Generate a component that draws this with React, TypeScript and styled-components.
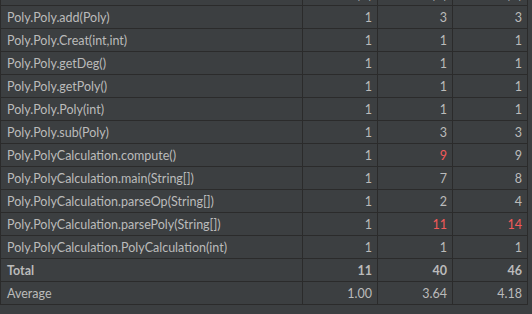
import React from 'react';
import styled, { createGlobalStyle } from 'styled-components';

const GlobalStyle = createGlobalStyle`
  html, body {
    margin: 0;
    padding: 0;
    background-color: #3c3f41;
    overflow: hidden;
  }
`;

const Panel = styled.div`
  width: 532px;
  height: 314px;
  background-color: #3c3f41;
  overflow: hidden;
  font-family: Lato, 'Noto Sans', sans-serif;
  font-size: 12.5px;
  color: #bbbbbb;
`;

const Table = styled.div`
  width: 528px;
  margin-top: -17px;
  border-left: 1px solid #2b2b2b;
  box-sizing: border-box;
`;

const Row = styled.div<{ $bold?: boolean }>`
  display: grid;
  grid-template-columns: 302px 75px 75px 75px;
  height: 22px;
  border-bottom: 1px solid #2b2b2b;
  font-weight: ${(p) => (p.$bold ? 700 : 400)};
`;

const Cell = styled.div<{ $num?: boolean; $alert?: boolean }>`
  box-sizing: border-box;
  border-right: 1px solid #2b2b2b;
  display: flex;
  align-items: center;
  justify-content: ${(p) => (p.$num ? 'flex-end' : 'flex-start')};
  padding: ${(p) => (p.$num ? '0 5px 0 0' : '0 0 0 6px')};
  color: ${(p) => (p.$alert ? '#f25a5a' : '#bbbbbb')};
  white-space: nowrap;
`;

type Metric = [string, string, string, string, boolean?, boolean?];

const rows: Metric[] = [
  ['Poly.Poly.add(Poly)', '1', '3', '3'],
  ['Poly.Poly.Creat(int,int)', '1', '1', '1'],
  ['Poly.Poly.getDeg()', '1', '1', '1'],
  ['Poly.Poly.getPoly()', '1', '1', '1'],
  ['Poly.Poly.Poly(int)', '1', '1', '1'],
  ['Poly.Poly.sub(Poly)', '1', '3', '3'],
  ['Poly.PolyCalculation.compute()', '1', '9', '9', true, false],
  ['Poly.PolyCalculation.main(String[])', '1', '7', '8'],
  ['Poly.PolyCalculation.parseOp(String[])', '1', '2', '4'],
  ['Poly.PolyCalculation.parsePoly(String[])', '1', '11', '14', true, true],
  ['Poly.PolyCalculation.PolyCalculation(int)', '1', '1', '1'],
];

const App = () => {
  return (
    <Panel>
      <GlobalStyle />
      <Table>
        <Row>
          <Cell>method</Cell>
          <Cell $num>ev(G)</Cell>
          <Cell $num>iv(G)</Cell>
          <Cell $num>v(G)</Cell>
        </Row>
        {rows.map(([name, ev, iv, v, ivHot, vHot]) => (
          <Row key={name}>
            <Cell>{name}</Cell>
            <Cell $num>{ev}</Cell>
            <Cell $num $alert={ivHot}>{iv}</Cell>
            <Cell $num $alert={vHot}>{v}</Cell>
          </Row>
        ))}
        <Row $bold>
          <Cell>Total</Cell>
          <Cell $num>11</Cell>
          <Cell $num>40</Cell>
          <Cell $num>46</Cell>
        </Row>
        <Row>
          <Cell>Average</Cell>
          <Cell $num>1.00</Cell>
          <Cell $num>3.64</Cell>
          <Cell $num>4.18</Cell>
        </Row>
      </Table>
    </Panel>
  );
};

export default App;
